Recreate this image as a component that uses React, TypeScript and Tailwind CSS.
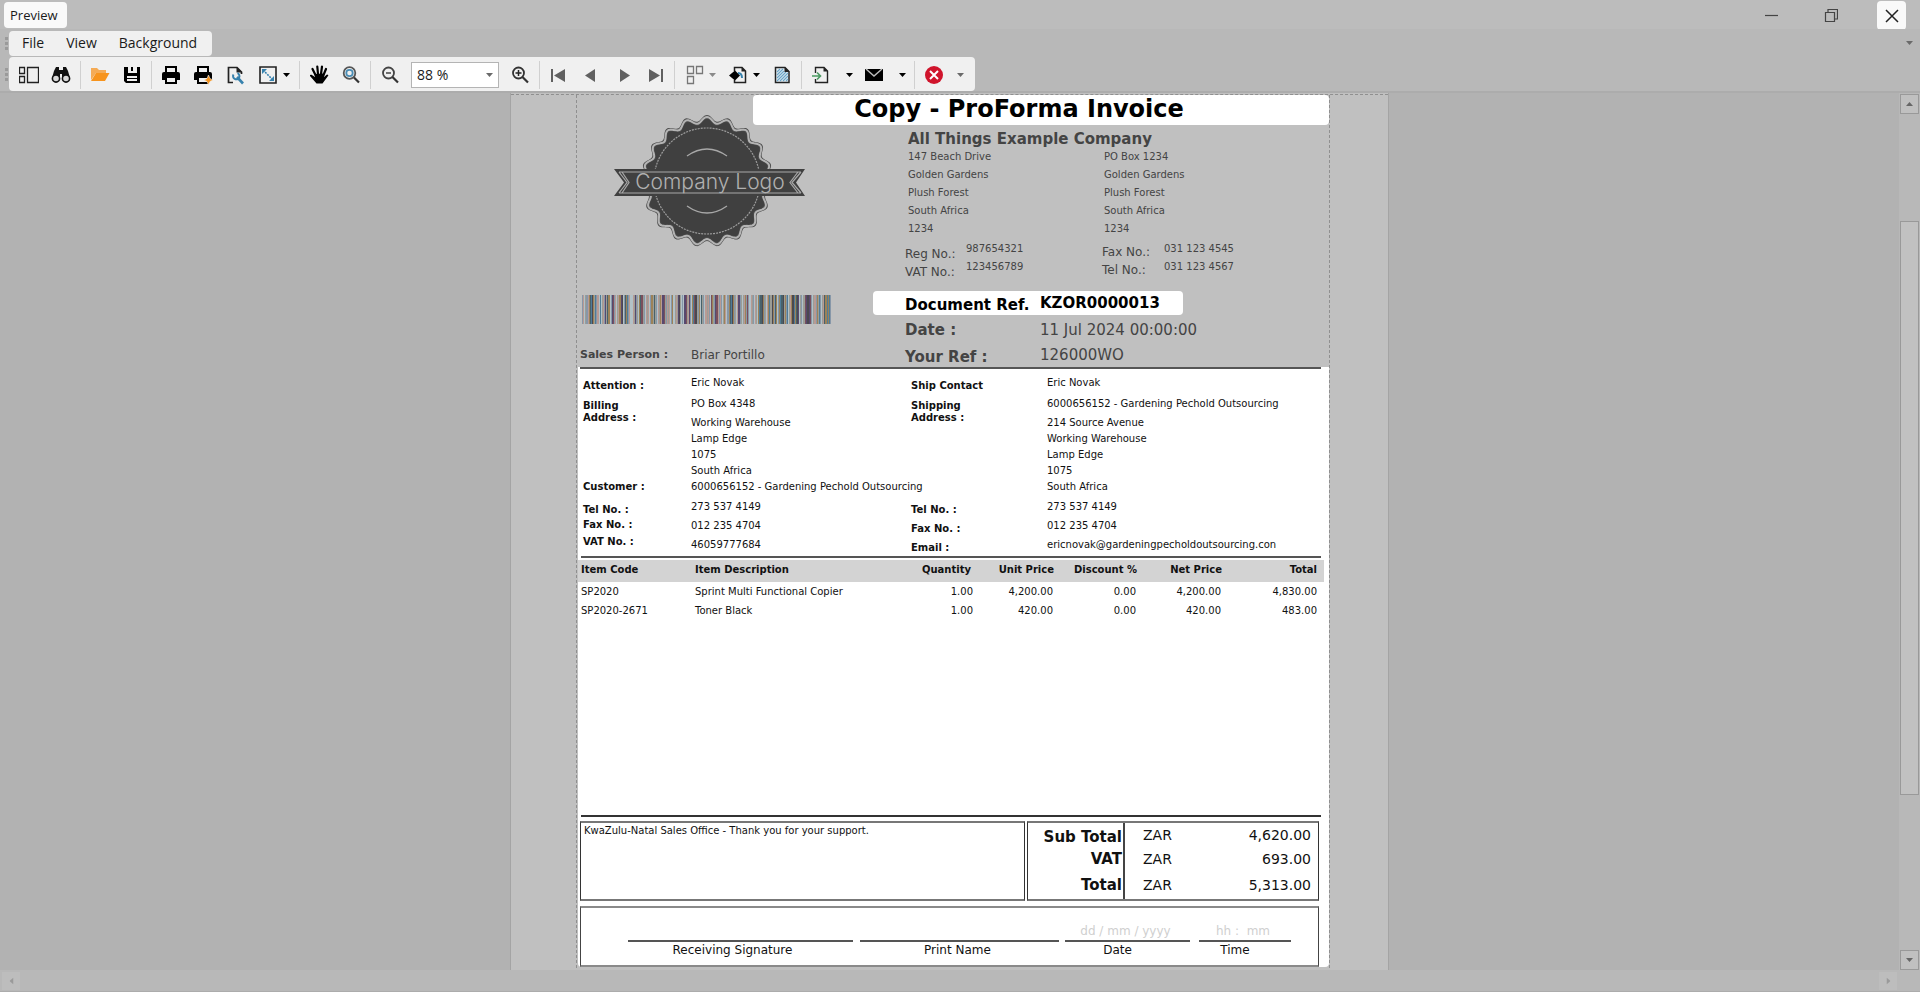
import { useState } from 'react';
import type { ReactNode } from 'react';

const items = [
  {
    code: 'SP2020',
    description: 'Sprint Multi Functional Copier',
    quantity: '1.00',
    unitPrice: '4,200.00',
    discount: '0.00',
    netPrice: '4,200.00',
    total: '4,830.00',
  },
  {
    code: 'SP2020-2671',
    description: 'Toner Black',
    quantity: '1.00',
    unitPrice: '420.00',
    discount: '0.00',
    netPrice: '420.00',
    total: '483.00',
  },
];

const physicalAddress = ['147 Beach Drive', 'Golden Gardens', 'Plush Forest', 'South Africa', '1234'];
const postalAddress = ['PO Box 1234', 'Golden Gardens', 'Plush Forest', 'South Africa', '1234'];

const barColors: Record<string, string> = {
  l: '#b3c2c8',
  d: '#4b4850',
  n: '#57496f',
  m: '#7a4f5c',
  p: '#b89a94',
  b: '#4f7c98',
  s: '#8797a8',
  o: '#9c8258',
  g: '#9b9d96',
  k: '#48616a',
};

const bars =
  'splgspokbdogbsplblgpsngkolsnmspl' +
  'gpondlskobspllpgnsglokmgslp' +
  'gplsogkgslpgopnmgspgplsol' +
  'gpgndglslnmgpnslobmdgsolkgs' +
  'lpgpslmogsnmpspslgopls' +
  'okbdosglpnsglgposmslpg' +
  'slpglobkdosglpobgdos' +
  'kolsobkdgosblgpodbokdnlgsl' +
  'gmnddnmslgpsogbslgpkobobs';

// scalloped edge of the seal
const sealPath = (radius: number, depth: number) => {
  const points: string[] = [];
  for (let i = 0; i < 380; i++) {
    const angle = (i / 380) * Math.PI * 2;
    const r = radius + depth * Math.cos(angle * 19);
    points.push(`${(95 + r * Math.sin(angle)).toFixed(2)} ${(67 - r * Math.cos(angle)).toFixed(2)}`);
  }
  return `M${points.join('L')}Z`;
};

function CompanyLogo() {
  return (
    <svg width="196" height="134" viewBox="0 0 196 134" className="ml-[34px] -mt-[11px] shrink-0">
      <path d={sealPath(63, 3)} fill="#4d4d4d" />
      <path d={sealPath(61, 3)} fill="none" stroke="#b4b4b4" strokeWidth="2" />
      <path d={sealPath(59, 3)} fill="#404040" />
      <circle cx="95" cy="67" r="53" fill="none" stroke="#9c9c9c" strokeWidth="1.2" strokeDasharray="2 1" />
      <path d="M75 42Q95 28 115 42M75 92Q95 106 115 92" fill="none" stroke="#a8a8a8" strokeWidth="1.3" />
      <path d="M2 55H193L184 68.5L193 82H2L12 68.5Z" fill="#404040" />
      <path
        d="M7 58H189M7 79H189M7 58L15 68.5L7 79M10 58L17 68.5L10 79M189 58L180 68.5L189 79M186 58L178 68.5L186 79"
        fill="none"
        stroke="#a8a8a8"
        strokeWidth="1.2"
      />
      <text x="98" y="75" textAnchor="middle" fontSize="21" fill="#b0b0b0" className="font-[Inter] font-light">
        Company Logo
      </text>
    </svg>
  );
}

function Barcode() {
  return (
    <svg
      width="249"
      height="29"
      viewBox={`0 0 ${bars.length} 29`}
      preserveAspectRatio="none"
      className="ml-1 mt-[47px] shrink-0"
      shapeRendering="crispEdges"
    >
      {bars.split('').map((bar, i) => (
        <rect key={i} x={i} y="0" width="1" height="29" fill={barColors[bar]} />
      ))}
    </svg>
  );
}

function Icon({ children, size = 20 }: { children: ReactNode; size?: number }) {
  return (
    <svg width={size} height={size} viewBox={`0 0 ${size} ${size}`} fill="none">
      {children}
    </svg>
  );
}

function Caret({ className = 'text-black' }: { className?: string }) {
  return (
    <svg width="7" height="4" viewBox="0 0 7 4" className={className}>
      <path d="M0 0H7L3.5 4Z" fill="currentColor" />
    </svg>
  );
}

function ToolButton({ label, className = 'w-8', children }: { label: string; className?: string; children: ReactNode }) {
  return (
    <button type="button" aria-label={label} className={`flex h-8 shrink-0 items-center justify-center ${className}`}>
      {children}
    </button>
  );
}

function Separator() {
  return <div className="mx-[3px] h-7 w-px shrink-0 bg-[#d0d0d0]" />;
}

function Grip() {
  return (
    <div className="flex w-[9px] flex-col items-center gap-0.5 pl-[3px]">
      <span className="size-[3px] bg-[#9a9a9a]" />
      <span className="size-[3px] bg-[#9a9a9a]" />
      <span className="size-[3px] bg-[#9a9a9a]" />
    </div>
  );
}

function TitleBar() {
  return (
    <header className="flex h-[29px] shrink-0 items-start bg-[#bcbcbc]">
      <h1 className="ml-1 mt-0.5 h-[26px] w-[63px] rounded bg-[#f9f9f9] pl-1.5 text-[13px] leading-[26px]">Preview</h1>
      <div className="ml-auto flex pr-[14px]">
        <button type="button" aria-label="Minimize" className="flex h-[30px] w-[60px] items-center justify-center">
          <Icon size={14}>
            <path d="M1 7.5H14" stroke="#444" strokeWidth="1.2" />
          </Icon>
        </button>
        <button type="button" aria-label="Restore" className="flex h-[30px] w-[60px] items-center justify-center">
          <Icon size={14}>
            <path d="M1.5 4.5H10.500V13.500H1.500ZM4 4V1.500H13.500V11H11" stroke="#444" strokeWidth="1.2" />
          </Icon>
        </button>
        <button type="button" aria-label="Close" className="ml-4 mt-px flex h-[29px] w-[29px] items-center justify-center rounded bg-[#f9f9f9]">
          <Icon size={14}>
            <path d="M1 1L13 13M13 1L1 13" stroke="#222" strokeWidth="1.5" />
          </Icon>
        </button>
      </div>
    </header>
  );
}

function MenuBar() {
  return (
    <div className="flex h-7 shrink-0 items-center bg-[#b8b8b8]">
      <Grip />
      <nav className="flex h-[25px] w-[203px] items-center gap-[22px] rounded bg-[#f0f0f0] pl-[13px] text-[14px] leading-5">
        <button type="button">File</button>
        <button type="button">View</button>
        <button type="button">Background</button>
      </nav>
      <button type="button" aria-label="More menu options" className="ml-auto mr-[7px]">
        <Caret className="text-[#6a6a6a]" />
      </button>
    </div>
  );
}

const printer = (
  <>
    <path d="M5 2H15V8H5Z" stroke="#000" strokeWidth="2" />
    <path d="M1 9Q1 7 3 7H17Q19 7 19 9V15H1Z" fill="#000" />
    <path d="M5 12H15V18H5Z" fill="#f0f0f0" stroke="#000" strokeWidth="2" />
  </>
);

function Toolbar() {
  const [zoom, setZoom] = useState('88 %');

  return (
    <div className="flex h-[34px] shrink-0 items-center bg-[#b8b8b8]">
      <Grip />
      <div className="flex h-[34px] w-[966px] shrink-0 items-center rounded bg-[#f0f0f0] pl-1 pt-px">
        <ToolButton label="Thumbnails">
          <Icon>
            <path d="M0.5 2.5H5.5V8.5H0.5ZM0.5 11.5H5.5V17.5H0.5ZM8.5 2.5H19.5V17.5H8.5Z" stroke="#222" strokeWidth="1.3" />
          </Icon>
        </ToolButton>
        <ToolButton label="Find">
          <Icon>
            <path d="M5 2H8V5H12V2H15L17 6L19 13H11V9H9V13H1L3 6Z" fill="#111" />
            <circle cx="5" cy="13.5" r="3.6" fill="#d8d8d8" stroke="#111" strokeWidth="1.6" />
            <circle cx="15" cy="13.5" r="3.6" fill="#d8d8d8" stroke="#111" strokeWidth="1.6" />
          </Icon>
        </ToolButton>
        <Separator />
        <ToolButton label="Open">
          <Icon>
            <path d="M1 3H7L9 5H16V8H6L1 15Z" fill="#f5ab55" />
            <path d="M6 8H19.5L15 16H1Z" fill="#f7941d" />
          </Icon>
        </ToolButton>
        <ToolButton label="Save">
          <Icon>
            <path d="M2 2H18V18H4L2 16Z" fill="#000" />
            <path d="M6 2H15V8H6Z" fill="#f0f0f0" />
            <path d="M9 2H11V6H9Z" fill="#000" />
            <path d="M5 11H15V16H5Z" fill="#f0f0f0" />
            <path d="M5 13.5H15" stroke="#000" />
          </Icon>
        </ToolButton>
        <Separator />
        <ToolButton label="Print">
          <Icon>{printer}</Icon>
        </ToolButton>
        <ToolButton label="Quick print">
          <Icon>
            {printer}
            <path d="M15.5 10L17 13.5L20 15L17 16.5L15.5 20L14 16.5L11 15L14 13.5Z" fill="#f7941d" stroke="#f0f0f0" strokeWidth="0.6" />
          </Icon>
        </ToolButton>
        <ToolButton label="Page setup">
          <Icon>
            <path d="M8 17.5H3.5V2.5H12L16.5 7V9" stroke="#222" strokeWidth="1.7" />
            <path d="M11.5 2V7.5H17Z" fill="#222" />
            <path d="M12 12L18 18.5" stroke="#3681ad" strokeWidth="2.6" />
            <path d="M8.5 9.5A3.2 3.2 0 1 0 12.5 8.2" stroke="#3681ad" strokeWidth="2" />
          </Icon>
        </ToolButton>
        <ToolButton label="Scale" className="w-[45px] gap-[5px]">
          <Icon>
            <path d="M2 2H18V18H2Z" stroke="#222" strokeWidth="1.6" />
            <path d="M5 5L15 15" stroke="#3681ad" strokeWidth="1.6" strokeDasharray="2 1" />
            <path d="M4 4H9L4 9ZM16 16H11L16 11Z" fill="#3681ad" />
          </Icon>
          <Caret />
        </ToolButton>
        <Separator />
        <ToolButton label="Hand tool">
          <Icon>
            <path
              d="M6.5 10L3.5 4M9 9L8.3 1.5M12 9L13 1.5M14.5 10L17 4"
              stroke="#000"
              strokeWidth="2.2"
              strokeLinecap="round"
            />
            <path d="M5.5 9L15.5 8.5L15 12L18 9.500Q20 9.5 19 11L13.5 18.5H7.5L1 11Q0.5 9.5 2.5 9.8L6 12Z" fill="#000" />
          </Icon>
        </ToolButton>
        <ToolButton label="Magnifier">
          <Icon>
            <circle cx="8.5" cy="8" r="5.8" stroke="#555" strokeWidth="1.8" />
            <circle cx="8.5" cy="8" r="3.2" stroke="#4a8db5" strokeWidth="1.8" />
            <path d="M13 12.5L18 17.5" stroke="#333" strokeWidth="2.2" />
          </Icon>
        </ToolButton>
        <Separator />
        <ToolButton label="Zoom out">
          <Icon>
            <circle cx="8.5" cy="8" r="5.5" stroke="#444" strokeWidth="1.8" />
            <path d="M6 8H11" stroke="#444" strokeWidth="1.5" />
            <path d="M12.5 12L18 17.5" stroke="#333" strokeWidth="2.2" />
          </Icon>
        </ToolButton>
        <div className="relative mx-[5px] shrink-0">
          <select
            aria-label="Zoom"
            value={zoom}
            onChange={(e) => setZoom(e.target.value)}
            className="block h-[26px] w-[88px] appearance-none border border-[#b4b4b4] bg-white pl-[5px] text-[14px]"
          >
            <option>50 %</option>
            <option>75 %</option>
            <option>88 %</option>
            <option>100 %</option>
          </select>
          <span className="pointer-events-none absolute right-1.5 top-[11px]">
            <Caret className="text-[#6a6a6a]" />
          </span>
        </div>
        <ToolButton label="Zoom in">
          <Icon>
            <circle cx="8.5" cy="8" r="5.5" stroke="#333" strokeWidth="1.8" />
            <path d="M5.5 8H11.5M8.5 5V11" stroke="#222" strokeWidth="1.5" />
            <path d="M12.5 12L18 17.5" stroke="#333" strokeWidth="2.2" />
          </Icon>
        </ToolButton>
        <Separator />
        <ToolButton label="First page">
          <Icon>
            <path d="M2 4H4V17H2ZM16 4V17L5 10.5Z" fill="#606060" />
          </Icon>
        </ToolButton>
        <ToolButton label="Previous page">
          <Icon>
            <path d="M14 4V17L4 10.5Z" fill="#606060" />
          </Icon>
        </ToolButton>
        <ToolButton label="Next page">
          <Icon>
            <path d="M7 4V17L17 10.5Z" fill="#606060" />
          </Icon>
        </ToolButton>
        <ToolButton label="Last page">
          <Icon>
            <path d="M16 4H18V17H16ZM4 4V17L15 10.5Z" fill="#606060" />
          </Icon>
        </ToolButton>
        <Separator />
        <ToolButton label="Multiple pages" className="w-11 gap-1">
          <Icon>
            <path d="M2.5 1.5H8.5V8.5H2.5ZM11.5 1.5H17.5V8.5H11.5ZM2.5 11.5H8.5V18.5H2.5Z" stroke="#777" strokeWidth="1.3" />
          </Icon>
          <Caret className="text-[#8a8a8a]" />
        </ToolButton>
        <ToolButton label="Page color" className="w-11 gap-[5px]">
          <Icon>
            <path d="M6.5 6V2.5H14L17.5 6V17.5H6.5V15" stroke="#222" strokeWidth="1.5" />
            <path d="M13.5 2V6.5H18Z" fill="#222" />
            <path d="M1 10.5L7 5.5L12 10.5L7 15.5Z" fill="#000" />
            <path d="M10 8Q14 8 14 13" stroke="#3681ad" strokeWidth="2" />
          </Icon>
          <Caret />
        </ToolButton>
        <ToolButton label="Watermark">
          <Icon>
            <path d="M3.5 2.5H13L17 6.5V17.5H3.5Z" fill="#e4edf2" stroke="#222" strokeWidth="1.5" />
            <path
              d="M5 7L8 4M5 10L11 4M5 13L12 6M5 16L14 7M8 16L16 8M11 16L16 11M14 16L16 14"
              stroke="#6aa5c8"
              strokeWidth="1.1"
            />
            <path d="M12.5 2V7H17.5Z" fill="#222" />
          </Icon>
        </ToolButton>
        <Separator />
        <ToolButton label="Export" className="w-[53px] gap-4">
          <Icon>
            <path d="M5.5 8V2.5H14L17.5 6V17.5H5.5V14" stroke="#222" strokeWidth="1.4" />
            <path d="M13.5 2V6.5H18Z" fill="#222" />
            <path d="M2 11H10M7 7.5L10.5 11L7 14.5" stroke="#4a9a62" strokeWidth="1.6" />
          </Icon>
          <Caret />
        </ToolButton>
        <ToolButton label="Send by e-mail" className="w-[53px] gap-[15px]">
          <Icon>
            <path d="M1 4H19V16H1Z" fill="#000" />
            <path d="M2 4L10 11L18 4" stroke="#bbb" strokeWidth="1.5" />
          </Icon>
          <Caret />
        </ToolButton>
        <Separator />
        <ToolButton label="Close preview">
          <Icon>
            <circle cx="10" cy="10" r="9" fill="#d0142c" />
            <path d="M6 6L14 14M14 6L6 14" stroke="#fff" strokeWidth="2" />
          </Icon>
        </ToolButton>
        <ToolButton label="More tools" className="w-5">
          <Caret className="text-[#6a6a6a]" />
        </ToolButton>
      </div>
    </div>
  );
}

function Lines({ lines }: { lines: string[] }) {
  return (
    <div>
      {lines.map((line, i) => (
        <p key={i}>{line}</p>
      ))}
    </div>
  );
}

function InvoiceHeader() {
  return (
    <section className="text-[#444]">
      <h2 className="ml-[175px] h-[30px] rounded bg-white pr-11 text-center text-[24px] font-bold leading-7 text-black">
        Copy - ProForma Invoice
      </h2>
      <div className="flex h-[242px]">
        <div className="flex w-[295px] shrink-0 flex-col">
          <CompanyLogo />
          <Barcode />
          <div className="mt-[23px] flex pl-0.5 leading-4">
            <span className="w-[111px] text-[11px] font-bold">Sales Person :</span>
            <span className="text-[12px]">Briar Portillo</span>
          </div>
        </div>
        <div className="flex-1 pt-[5px]">
          <h3 className="pl-[35px] text-[15px] font-bold leading-[18px]">All Things Example Company</h3>
          <div className="grid grid-cols-[196px_1fr] pl-[35px] text-[10px] leading-[18px]">
            <Lines lines={physicalAddress} />
            <Lines lines={postalAddress} />
          </div>
          <div className="grid grid-cols-[61px_136px_62px_1fr] pl-8 text-[10px] leading-[18px]">
            <div className="pt-[7px] text-[12px]">
              <Lines lines={['Reg No.:', 'VAT No.:']} />
            </div>
            <div className="pt-0.5">
              <Lines lines={['987654321', '123456789']} />
            </div>
            <div className="pt-[5px] text-[12px]">
              <Lines lines={['Fax No.:', 'Tel No.:']} />
            </div>
            <div className="pt-0.5">
              <Lines lines={['031 123 4545', '031 123 4567']} />
            </div>
          </div>
          <div className="mt-[10px] text-[15px] leading-6">
            <div className="flex h-6 w-[310px] rounded bg-white pl-8 font-bold text-black">
              <span className="w-[135px] pt-0.5">Document Ref.</span>
              <span>KZOR0000013</span>
            </div>
            <div className="mt-[3px] flex pl-8">
              <span className="w-[135px] font-bold">Date :</span>
              <span>11 Jul 2024 00:00:00</span>
            </div>
            <div className="mt-px flex h-6 pl-8">
              <span className="w-[135px] pt-0.5 font-bold">Your Ref :</span>
              <span>126000WO</span>
            </div>
          </div>
        </div>
      </div>
    </section>
  );
}

function PartyValues({ name, first, address, contact }: { name: string; first: string; address: string[]; contact: string[] }) {
  return (
    <div className="whitespace-nowrap pt-1.5">
      <p>{name}</p>
      <p className="mt-[5px]">{first}</p>
      <div className="mt-[3px]">
        <Lines lines={address} />
      </div>
      <div className="mt-1 flex flex-col gap-[3px]">
        {contact.map((line) => (
          <p key={line}>{line}</p>
        ))}
      </div>
    </div>
  );
}

function Parties() {
  return (
    <section className="grid h-[187px] grid-cols-[108px_220px_136px_1fr] pl-[5px] text-[10px] leading-4">
      <div className="pt-[9px] font-bold">
        <p>Attention :</p>
        <p className="mt-1.5 leading-3">
          Billing
          <br />
          Address :
        </p>
        <p className="mt-[55px]">Customer :</p>
        <p className="mt-[7px]">Tel No. :</p>
        <p className="-mt-px">Fax No. :</p>
        <p className="mt-px">VAT No. :</p>
      </div>
      <PartyValues
        name="Eric Novak"
        first="PO Box 4348"
        address={['Working Warehouse', 'Lamp Edge', '1075', 'South Africa', '6000656152 - Gardening Pechold Outsourcing']}
        contact={['273 537 4149', '012 235 4704', '46059777684']}
      />
      <div className="pt-[9px] font-bold">
        <p>Ship Contact</p>
        <p className="mt-1.5 leading-3">
          Shipping
          <br />
          Address :
        </p>
        <div className="mt-[78px] flex flex-col gap-[3px]">
          <p>Tel No. :</p>
          <p>Fax No. :</p>
          <p>Email :</p>
        </div>
      </div>
      <PartyValues
        name="Eric Novak"
        first="6000656152 - Gardening Pechold Outsourcing"
        address={['214 Source Avenue', 'Working Warehouse', 'Lamp Edge', '1075', 'South Africa']}
        contact={['273 537 4149', '012 235 4704', 'ericnovak@gardeningpecholdoutsourcing.con']}
      />
    </section>
  );
}

function ItemsTable() {
  return (
    <table className="mt-0.5 w-[746px] table-fixed text-right text-[10px] leading-[19px]">
      <thead className="bg-[#d3d3d3]">
        <tr>
          <th className="w-[117px] pb-[3px] pl-[3px] text-left">Item Code</th>
          <th className="pb-[3px] text-left">Item Description</th>
          <th className="w-[82px] pb-[3px] pr-0.5">Quantity</th>
          <th className="w-[81px] pb-[3px]">Unit Price</th>
          <th className="w-[83px] pb-[3px]">Discount %</th>
          <th className="w-[85px] pb-[3px]">Net Price</th>
          <th className="w-[102px] pb-[3px] pr-[7px]">Total</th>
        </tr>
      </thead>
      <tbody>
        {items.map((item) => (
          <tr key={item.code}>
            <td className="pl-[3px] text-left">{item.code}</td>
            <td className="text-left">{item.description}</td>
            <td>{item.quantity}</td>
            <td className="pr-px">{item.unitPrice}</td>
            <td className="pr-px">{item.discount}</td>
            <td className="pr-px">{item.netPrice}</td>
            <td className="pr-[7px]">{item.total}</td>
          </tr>
        ))}
      </tbody>
    </table>
  );
}

function Totals() {
  return (
    <section className="ml-0.5 mt-1 flex h-20 gap-0.5">
      <p className="w-[445px] border-x border-y-2 border-x-[#333] border-y-[#777] pl-[3px] text-[10px] leading-4">
        KwaZulu-Natal Sales Office - Thank you for your support.
      </p>
      <div className="flex w-[292px] border-x border-y-2 border-x-[#333] border-y-[#777] leading-[22px]">
        <div className="w-[97px] border-r-2 border-[#444] pr-px pt-[3px] text-right text-[15px] font-bold">
          <p>Sub Total</p>
          <p>VAT</p>
          <p className="mt-1">Total</p>
        </div>
        <div className="w-[67px] pl-[18px] pt-px text-[14px]">
          <p>ZAR</p>
          <p className="mt-0.5">ZAR</p>
          <p className="mt-1">ZAR</p>
        </div>
        <div className="flex-1 pr-[7px] pt-px text-right text-[14px]">
          <p>4,620.00</p>
          <p className="mt-0.5">693.00</p>
          <p className="mt-1">5,313.00</p>
        </div>
      </div>
    </section>
  );
}

function SignField({ label, hint, className, labelClass = 'pr-4' }: { label: string; hint?: string; className: string; labelClass?: string }) {
  return (
    <div className={`text-center ${className}`}>
      <div className="flex h-8 items-end justify-center whitespace-pre pr-1 text-[12px] leading-[18px] text-[#cfcfcf]">{hint}</div>
      <div className="h-0.5 bg-[#555]" />
      <p className={`text-[12px] leading-4 ${labelClass}`}>{label}</p>
    </div>
  );
}

function InvoicePage() {
  return (
    <div className="mx-auto flex h-full w-[879px] flex-col border-x border-[#a4a4a4] bg-[#c0c0c0] pt-px font-['DejaVu_Sans',sans-serif] text-[#111]">
      <div className="border-t border-dashed border-[#8f8f8f] pl-[65px] pr-[58px]">
        <div className="border-x border-dashed border-[#8f8f8f] pb-px pl-px">
          <InvoiceHeader />
          <div className="rounded-b bg-white">
            <div className="ml-0.5 mr-2 h-0.5 bg-[#555]" />
            <Parties />
            <div className="ml-[3px] mr-2 h-0.5 bg-[#555]" />
            <ItemsTable />
            <div className="ml-[3px] mr-2 mt-[195px] h-0.5 bg-[#333]" />
            <Totals />
            <section className="ml-0.5 mt-[5px] flex h-[61px] w-[739px] border-x border-y-2 border-x-[#444] border-y-[#8a8a8a] pl-[47px]">
              <SignField label="Receiving Signature" className="w-[225px]" />
              <SignField label="Print Name" className="ml-[7px] w-[199px]" labelClass="pr-1" />
              <SignField label="Date" hint="dd / mm / yyyy" className="ml-[6px] w-[125px]" labelClass="pr-5" />
              <SignField label="Time" hint="hh :  mm" className="ml-[9px] w-[92px]" labelClass="pr-5" />
            </section>
          </div>
        </div>
      </div>
    </div>
  );
}

export default function App() {
  return (
    <div className="flex h-screen flex-col overflow-hidden bg-[#b8b8b8] font-['Open_Sans',sans-serif] text-[#1a1a1a]">
      <TitleBar />
      <MenuBar />
      <Toolbar />
      <div className="flex min-h-0 flex-1 border-t-2 border-[#acacac]">
        <main className="min-w-0 flex-1 overflow-hidden bg-[#b2b2b2]">
          <InvoicePage />
        </main>
        <div className="flex w-[21px] flex-col items-center bg-[#b8b8b8] pt-px">
          <button type="button" aria-label="Scroll up" className="flex h-5 w-[19px] items-center justify-center border border-[#999] bg-[#c0c0c0]">
            <Caret className="rotate-180 text-[#666]" />
          </button>
          <div className="mt-[107px] h-[574px] w-[19px] border border-[#999] bg-[#c1c1c1]" />
          <button type="button" aria-label="Scroll down" className="mt-auto flex h-5 w-[19px] items-center justify-center border border-[#999] bg-[#c0c0c0]">
            <Caret className="text-[#666]" />
          </button>
        </div>
      </div>
      <div className="flex h-[22px] shrink-0 items-center justify-between border-b border-[#acacac] pl-0.5 pr-[23px]">
        <button type="button" aria-label="Scroll left" className="flex size-[18px] items-center justify-center bg-[#bdbdbd]">
          <Caret className="rotate-90 text-[#9a9a9a]" />
        </button>
        <button type="button" aria-label="Scroll right" className="flex size-[18px] items-center justify-center bg-[#bdbdbd]">
          <Caret className="-rotate-90 text-[#9a9a9a]" />
        </button>
      </div>
    </div>
  );
}
